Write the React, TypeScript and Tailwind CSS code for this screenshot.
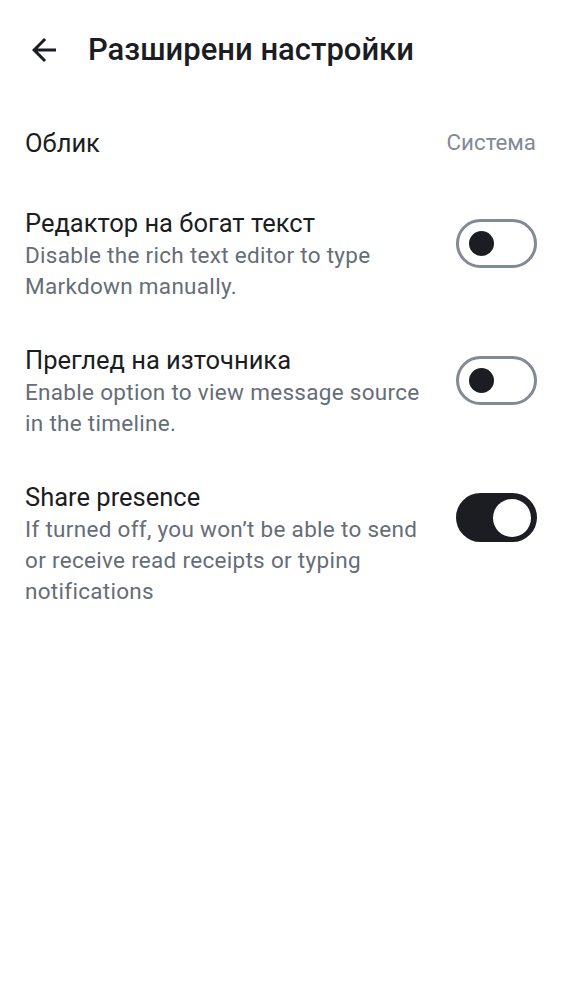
import React from "react";

function Toggle({ on }: { on: boolean }) {
  if (on) {
    return (
      <div className="w-[81px] h-[49px] rounded-full bg-[#1b1d22] flex items-center justify-end pr-[6px] shrink-0">
        <div className="w-[38px] h-[38px] rounded-full bg-white" />
      </div>
    );
  }
  return (
    <div className="w-[81px] h-[49px] rounded-full border-[3px] border-[#818a95] bg-white flex items-center pl-[10px] shrink-0">
      <div className="w-[25px] h-[25px] rounded-full bg-[#1b1d22]" />
    </div>
  );
}

function Row({ title, desc, on }: { title: string; desc: string; on: boolean }) {
  return (
    <div className="flex items-start justify-between pl-[25px] pr-[25px]">
      <div className="flex flex-col max-w-[398px]">
        <div className="text-[25.5px] leading-[34px] text-[#1b1d22]">{title}</div>
        <div className="text-[22.5px] leading-[31px] text-[#656d77] tracking-[0.3px]">{desc}</div>
      </div>
      <div className="pt-[13px]">
        <Toggle on={on} />
      </div>
    </div>
  );
}

export default function App() {
  return (
    <div className="w-[562px] h-[1000px] bg-white" style={{ fontFamily: "Roboto, sans-serif" }}>
      <div className="flex items-center h-[100px] pl-[26px]">
        <svg width="36" height="36" viewBox="0 0 24 24" className="shrink-0">
          <path d="M20 11H7.83l5.59-5.59L12 4l-8 8 8 8 1.41-1.41L7.83 13H20v-2z" fill="#1b1d22" />
        </svg>
        <div className="ml-[26px] text-[31px] font-medium text-[#1b1d22]">Разширени настройки</div>
      </div>
      <div className="flex items-center justify-between pl-[25px] pr-[26px] h-[86px]">
        <div className="text-[25.5px] text-[#1b1d22]">Облик</div>
        <div className="text-[22.3px] text-[#818a95]">Система</div>
      </div>
      <div className="flex flex-col gap-[41px] mt-[20px]">
        <Row on={false} title="Редактор на богат текст" desc="Disable the rich text editor to type Markdown manually." />
        <Row on={false} title="Преглед на източника" desc="Enable option to view message source in the timeline." />
        <Row on={true} title="Share presence" desc="If turned off, you won’t be able to send or receive read receipts or typing notifications" />
      </div>
    </div>
  );
}
